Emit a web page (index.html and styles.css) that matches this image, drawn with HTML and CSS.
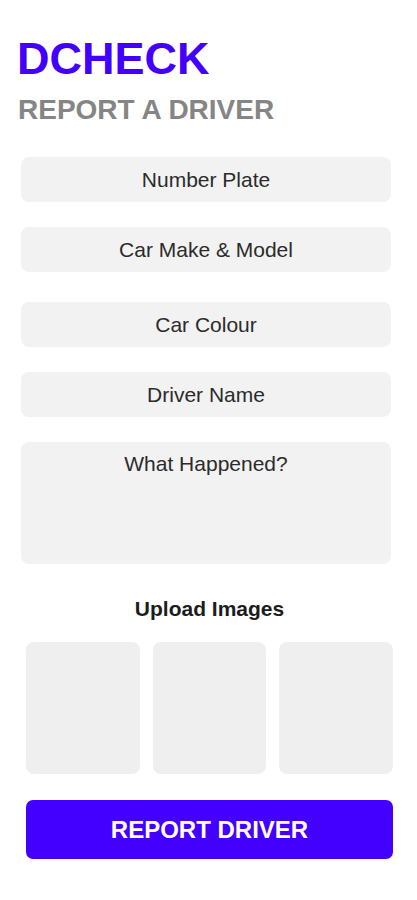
FILE: index.html
```html
<!DOCTYPE html>
<html lang="en">
<head>
  <meta charset="UTF-8" />
  <meta name="viewport" content="width=device-width, initial-scale=1" />
  <title>Report a Driver | DCheck</title>
  <link rel="stylesheet" href="styles.css">
</head>
<body>

<header class="top">
  <h1 class="logo">DCHECK</h1>
  <h2 class="subtitle">REPORT A DRIVER</h2>
</header>

<main>
  <form id="report-form" class="fields">
    <input type="text" class="field" placeholder="Number Plate" />
    <input type="text" class="field" placeholder="Car Make &amp; Model" />
    <input type="text" class="field field-spaced" placeholder="Car Colour" />
    <input type="text" class="field" placeholder="Driver Name" />
    <textarea class="field field-area" placeholder="What Happened?"></textarea>
  </form>

  <section class="upload">
    <h3 class="upload-title">Upload Images</h3>
    <div class="slots">
      <div class="slot"></div>
      <div class="slot"></div>
      <div class="slot"></div>
    </div>
    <button type="submit" form="report-form" class="report-btn">REPORT DRIVER</button>
  </section>
</main>

</body>
</html>
```

FILE: styles.css
```css
body {
  margin: 0;
  background-color: #fff;
  color: #222;
  font-family: 'Liberation Sans', Arial, Helvetica, sans-serif;
}
.top {
  padding: 36px 17px 0;
}
.logo {
  margin: 0;
  color: #4400ff;
  font-size: 45px;
  line-height: 45px;
  font-weight: bold;
}
.subtitle {
  margin: 15px 0 0 1px;
  color: #858585;
  font-size: 28px;
  line-height: 28px;
  font-weight: bold;
}
.fields {
  display: flex;
  flex-direction: column;
  gap: 25px;
  padding: 33px 26px 0 21px;
}
.field {
  height: 45px;
  margin: 0;
  padding: 0 10px;
  border: none;
  border-radius: 8px;
  background-color: #f2f2f2;
  font-family: inherit;
  font-size: 21px;
  color: #222;
  text-align: center;
  box-sizing: border-box;
  outline: none;
}
.field::placeholder {
  color: #2b2b2b;
  opacity: 1;
}
.field-spaced {
  margin-top: 5px;
}
.field-area {
  height: 122px;
  padding-top: 10px;
  line-height: 24px;
  resize: none;
}
.upload {
  padding: 33px 24px 0 26px;
}
.upload-title {
  margin: 0;
  text-align: center;
  font-size: 21px;
  line-height: 24px;
  font-weight: bold;
  color: #1c1c1c;
}
.slots {
  display: grid;
  grid-template-columns: repeat(3, 1fr);
  gap: 13px;
  margin-top: 21px;
}
.slot {
  height: 132px;
  border-radius: 8px;
  background-color: #efefef;
}
.report-btn {
  display: block;
  width: 100%;
  height: 59px;
  margin-top: 26px;
  border: none;
  border-radius: 7px;
  background-color: #4400ff;
  color: #fff;
  font-family: inherit;
  font-size: 24px;
  font-weight: bold;
  cursor: pointer;
}
```
